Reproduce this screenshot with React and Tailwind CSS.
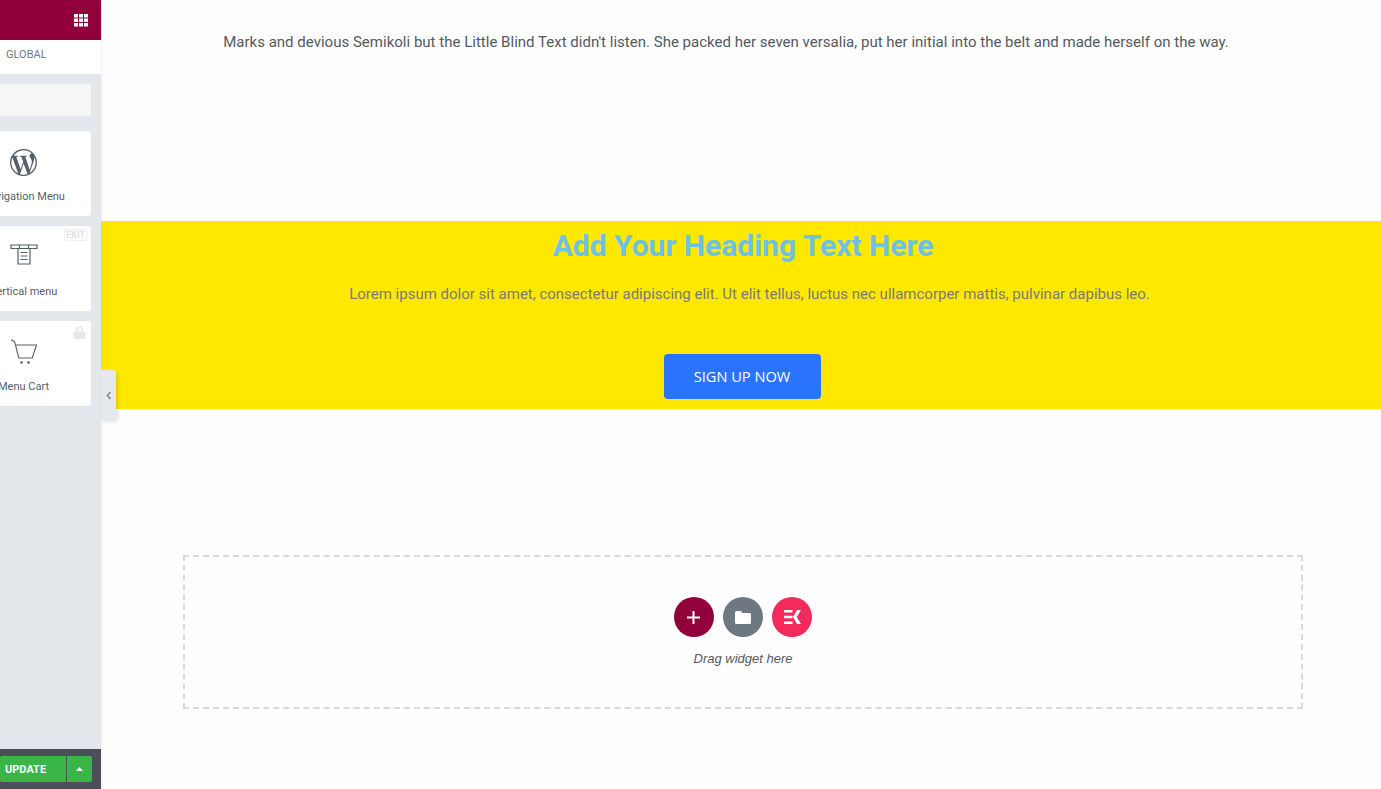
import React from "react";

const roboto = "font-['Roboto',sans-serif]";

function Card({ label, children, badge }) {
  return (
    <div className="relative flex h-[85px] w-[136px] flex-col items-center rounded-[3px] bg-white pl-px pt-[17px] shadow-[0_0_1px_rgba(0,0,0,0.05)]">
      {badge}
      <div className="flex h-[28px] w-[28px] items-center justify-center">{children}</div>
      <div className="mt-[13px] whitespace-nowrap text-[11px] leading-[16px] text-[#556068]">{label}</div>
    </div>
  );
}

export default function App() {
  return (
    <div className={`relative flex h-[789px] w-[1381px] overflow-hidden bg-[#fefefe] ${roboto}`}>
      <aside className="z-[1] flex h-full w-[101px] shrink-0 flex-col overflow-hidden bg-[#e4e7eb] shadow-[1px_0_2px_rgba(0,0,0,0.06)]">
        <div className="flex h-[40px] shrink-0 items-center justify-end bg-[#92003b] pr-[13px]">
          <svg width="14" height="13" viewBox="0 0 14 13" fill="#fff">
            {[0, 5, 10].map((x) =>
              [0, 4.5, 9].map((y) => <rect key={`${x}-${y}`} x={x} y={y} width="4" height="3.5" />)
            )}
          </svg>
        </div>
        <div className="flex h-[34px] shrink-0 items-center bg-white pb-[3px] pl-[6px] text-[11px] text-[#6d7882]">GLOBAL</div>
        <div className="mt-[10px] ml-[-45px] h-[32px] w-[136px] shrink-0 rounded-[3px] bg-[#f6f6f6]" />
        <div className="mt-[15px] ml-[-45px] flex flex-col gap-[10px]">
          <Card label="Navigation Menu">
            <svg width="27" height="27" viewBox="0 0 24 24" fill="#556068">
              <path d="M12 0C5.4 0 0 5.4 0 12s5.4 12 12 12 12-5.4 12-12S18.600 0 12 0zM1.200 12c0-1.600.3-3 .9-4.400l5.200 14.100C3.700 19.900 1.200 16.200 1.200 12zM12 22.800c-1.100 0-2.100-.2-3.100-.4l3.200-9.500 3.400 9.200c0 .1 0 .1.100.2-1.100.3-2.300.5-3.600.5zm1.500-15.900c.6 0 1.200-.1 1.200-.1.600-.1.500-.9-.1-.9 0 0-1.700.1-2.800.1-1 0-2.700-.1-2.700-.1-.6 0-.7.900-.1.900 0 0 .5.100 1.100.1l1.600 4.400-2.300 6.800-3.800-11.200c.6 0 1.200-.1 1.200-.1.600-.1.500-.9-.1-.9 0 0-1.700.1-2.800.1h-.7C5 3.700 8.300 1.200 12 1.200c2.800 0 5.400 1.100 7.300 2.800h-.1c-1.100 0-1.800.9-1.800 1.900 0 .9.500 1.600 1.100 2.500.4.700.9 1.600.9 3 0 .9-.4 2-.8 3.500l-1.100 3.600-3.900-11.600zm3.900 14.500l3.300-9.500c.6-1.500.8-2.700.8-3.800 0-.4 0-.8-.1-1.100.9 1.500 1.400 3.200 1.400 5 0 3.900-2.200 7.400-5.400 9.400z" />
            </svg>
          </Card>
          <Card
            label="Vertical menu"
            badge={
              <span className="absolute right-[4px] top-[3px] rounded-[2px] border border-[#eceef0] px-[1px] text-[9px] font-bold leading-[10px] text-[#dfe2e6]">
                EKIT
              </span>
            }
          >
            <svg className="mt-[-4px]" width="28" height="22" viewBox="0 0 28 22" fill="none" stroke="#556068" strokeWidth="1.2">
              <path d="M1 1h26v3.500H1zM9.500 1v3.500M18.500 1v3.500M8 4.500v15.500h12V4.500M10.500 8.500h7M10.500 12h7M10.500 15.500h7" />
            </svg>
          </Card>
          <Card
            label="Menu Cart"
            badge={
              <svg className="absolute right-[5px] top-[5px]" width="13" height="13" viewBox="0 0 13 13" fill="#e6e9ec">
                <path d="M3 5.500V4a3.500 3.500 0 0 1 7 0v1.500h1.500a1 1 0 0 1 1 1V12a1 1 0 0 1-1 1h-10a1 1 0 0 1-1-1V6.500a1 1 0 0 1 1-1zm1.700 0h3.600V4a1.800 1.800 0 0 0-3.600 0z" />
              </svg>
            }
          >
            <svg width="28" height="26" viewBox="0 0 28 26" fill="none" stroke="#556068" strokeWidth="1.1">
              <path d="M1 1c2.500 0 3.500 1.500 4 3l3.800 15h13.400L26.500 6H5.500" />
              <circle cx="11.500" cy="23.500" r="1.300" fill="#556068" stroke="none" />
              <circle cx="18.500" cy="23.500" r="1.300" fill="#556068" stroke="none" />
            </svg>
          </Card>
        </div>
        <div className="mt-auto flex h-[40px] shrink-0 items-center gap-px bg-[#4b5058] pr-[9px]">
          <div className="flex h-[26px] flex-1 items-center rounded-l-[2px] bg-[#39b54a] pl-[5px] pt-[2px] text-[11px] font-bold text-white">UPDATE</div>
          <div className="flex h-[26px] w-[25px] items-center justify-center rounded-r-[2px] bg-[#39b54a]">
            <svg width="7" height="4" viewBox="0 0 7 4" fill="#fff"><path d="M3.500 0L7 4H0z" /></svg>
          </div>
        </div>
      </aside>

      <div className="absolute left-[101px] top-[370px] z-10 flex h-[50px] w-[15px] items-center justify-center rounded-r-[3px] bg-[#e6e9ec] pt-[1px] shadow-[2px_2px_4px_rgba(0,0,0,0.12)]">
        <svg width="6" height="9" viewBox="0 0 6 9" fill="none" stroke="#6d7882" strokeWidth="1.2"><path d="M4.500 1L1.300 4.500 4.500 8" /></svg>
      </div>

      <main className="flex min-w-0 flex-1 flex-col">
        <div className="h-[221px] shrink-0 pt-[32px] pr-[30px] text-center text-[15px] leading-[20px] tracking-[0.013px] text-[#54595f]">
          Marks and devious Semikoli but the Little Blind Text didn't listen. She packed her seven versalia, put her initial into the belt and made herself on the way.
        </div>
        <section className="flex h-[188px] shrink-0 flex-col items-center bg-[#ffe800]">
          <h2 className="pl-[4px] text-[30px] font-bold leading-[49px] text-[#6ec1e4]">Add Your Heading Text Here</h2>
          <p className="mt-[14px] pl-[17px] text-[15px] leading-[20px] text-[#7a7a7a]">
            Lorem ipsum dolor sit amet, consectetur adipiscing elit. Ut elit tellus, luctus nec ullamcorper mattis, pulvinar dapibus leo.
          </p>
          <button className="ml-[2px] mt-[50px] flex h-[45px] w-[157px] items-center justify-center rounded-[4px] bg-[#2a74fd] font-['Open_Sans',sans-serif] text-[14.6px] text-white">
            SIGN UP NOW
          </button>
        </section>
        <div className="mt-[146px] ml-[82px] flex h-[154px] w-[1120px] flex-col items-center border-2 border-dashed border-[#d5dadf] pt-[40px]">
          <div className="flex gap-[9px]">
            <div className="flex h-[40px] w-[40px] items-center justify-center rounded-full bg-[#92003b] pr-[1px]">
              <svg width="13" height="13" viewBox="0 0 13 13" fill="#fff"><path d="M5.500 0h2v5.500H13v2H7.500V13h-2V7.500H0v-2h5.500z" /></svg>
            </div>
            <div className="flex h-[40px] w-[40px] items-center justify-center rounded-full bg-[#6d7882]">
              <svg width="16" height="13" viewBox="0 0 16 13" fill="#fff"><path d="M1.500 0h4.200l1.800 2h7a1.500 1.500 0 0 1 1.500 1.500v8A1.500 1.500 0 0 1 14.500 13h-13A1.500 1.500 0 0 1 0 11.500v-10A1.500 1.500 0 0 1 1.500 0z" /></svg>
            </div>
            <div className="flex h-[40px] w-[40px] items-center justify-center rounded-full bg-[#f4295c]">
              <svg width="17" height="14" viewBox="0 0 17 14" fill="#fff"><path d="M0 0h8.500v2.600H0zM0 5.700h8.500v2.600H0zM0 11.400h8.500V14H0zM13 0h4l-4.200 7 4.200 7h-4L9 7z" /></svg>
            </div>
          </div>
          <div className="mt-[14px] font-['Liberation_Sans',sans-serif] text-[13px] italic leading-[16px] text-[#54595f]">Drag widget here</div>
        </div>
      </main>
    </div>
  );
}
